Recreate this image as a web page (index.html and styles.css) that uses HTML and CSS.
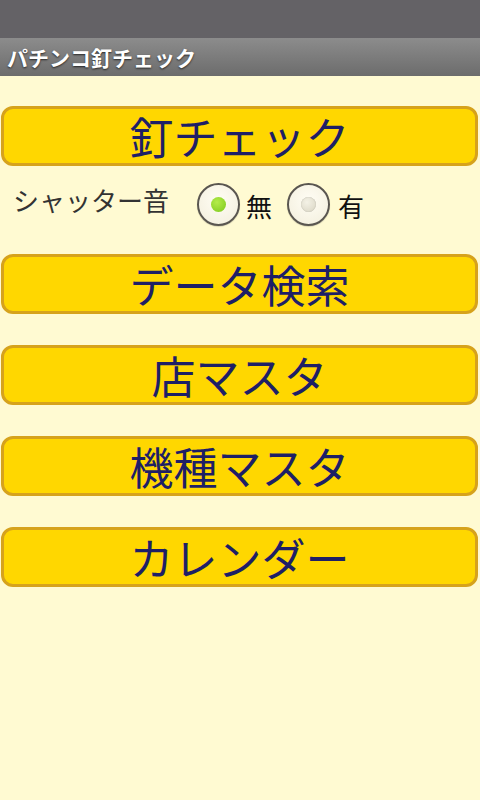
FILE: index.html
```html
<!DOCTYPE html>
<html lang="ja">
<head>
<meta charset="utf-8">
<title>パチンコ釘チェック</title>
<link rel="stylesheet" href="styles.css">
</head>
<body>
<div class="status-bar"></div>
<div class="title-bar">パチンコ釘チェック</div>
<main class="content">
  <button class="menu-btn">釘チェック</button>
  <div class="shutter-row">
    <span class="shutter-label">シャッター音</span>
    <label class="radio first">
      <span class="radio-circle"><span class="dot on"></span></span>
      <span class="radio-text">無</span>
    </label>
    <label class="radio second">
      <span class="radio-circle"><span class="dot off"></span></span>
      <span class="radio-text">有</span>
    </label>
  </div>
  <button class="menu-btn">データ検索</button>
  <button class="menu-btn spaced">店マスタ</button>
  <button class="menu-btn spaced">機種マスタ</button>
  <button class="menu-btn spaced">カレンダー</button>
</main>
</body>
</html>
```
FILE: styles.css
```css
html, body {
  margin: 0;
  padding: 0;
}
body {
  width: 480px;
  height: 800px;
  background: #fffad2;
  font-family: "Noto Sans CJK JP", "Noto Sans", sans-serif;
  overflow: hidden;
}
.status-bar {
  height: 38px;
  background: #646266;
}
.title-bar {
  height: 38px;
  box-sizing: border-box;
  padding-left: 7px;
  display: flex;
  align-items: center;
  background: linear-gradient(#8c8c8c, #6c6c6c);
  color: #ffffff;
  font-size: 21px;
  font-weight: bold;
  line-height: 1;
  text-shadow: 0 1px 2px rgba(0, 0, 0, 0.7);
}
.content {
  padding: 30px 2px 0 1px;
  display: flex;
  flex-direction: column;
}
.menu-btn {
  display: block;
  width: 100%;
  height: 60px;
  margin: 0;
  padding: 0;
  box-sizing: border-box;
  border: 3px solid #d6a21c;
  border-radius: 12px;
  background: #ffd700;
  color: #1e1f66;
  font-family: "Noto Sans CJK JP", "Noto Sans", sans-serif;
  font-size: 44px;
  line-height: 1;
  text-align: center;
}
.menu-btn.spaced {
  margin-top: 31px;
}
.shutter-row {
  height: 88px;
  box-sizing: border-box;
  padding-top: 17px;
  display: flex;
  align-items: flex-start;
}
.shutter-label {
  margin-left: 12px;
  margin-top: 1px;
  font-size: 26px;
  line-height: 1.2;
  color: #333333;
  width: 156px;
}
.radio {
  display: flex;
  align-items: center;
}
.radio.first {
  margin-left: 28px;
}
.radio.second {
  margin-left: 15px;
}
.radio-circle {
  width: 43px;
  height: 43px;
  box-sizing: border-box;
  border: 2px solid #5a5650;
  border-radius: 50%;
  background: radial-gradient(circle at 50% 40%, #fffdf4, #f2eedc);
  box-shadow: 0 1px 1px rgba(0, 0, 0, 0.15);
  display: flex;
  align-items: center;
  justify-content: center;
}
.dot {
  width: 15px;
  height: 15px;
  border-radius: 50%;
}
.dot.on {
  background: radial-gradient(circle at 40% 35%, #b4ec4a, #7cc81c);
}
.dot.off {
  background: radial-gradient(circle at 40% 35%, #f4f2e6, #d8d4c2);
  box-shadow: inset 0 0 1px rgba(0, 0, 0, 0.3);
}
.radio-text {
  margin-left: 6px;
  font-size: 26px;
  line-height: 1;
  color: #111111;
  padding-top: 3px;
}
.radio.second .radio-text {
  margin-left: 8px;
}
```
